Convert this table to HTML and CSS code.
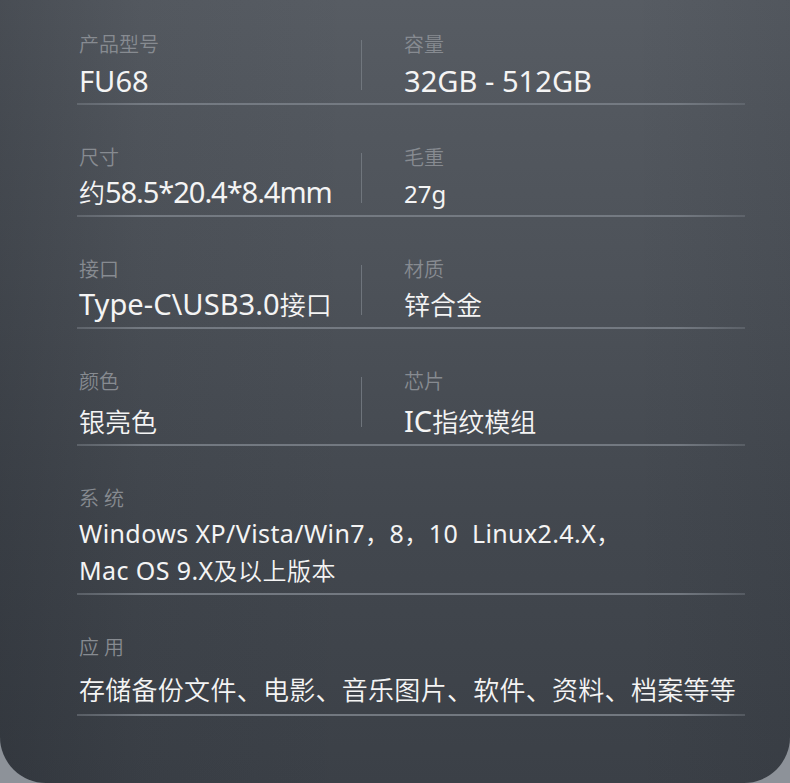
FILE: index.html
```html
<!DOCTYPE html>
<html lang="zh-CN">
<head>
<meta charset="utf-8">
<title>产品参数</title>
<link rel="stylesheet" href="styles.css">
</head>
<body>
<div class="card">
  <div class="specs">
    <div class="row r1">
      <div class="cell"><div class="label">产品型号</div><div class="value"><span class="en">FU68</span></div></div>
      <div class="divider"></div>
      <div class="cell right"><div class="label">容量</div><div class="value"><span class="en">32GB - 512GB</span></div></div>
    </div>
    <div class="row">
      <div class="cell"><div class="label">尺寸</div><div class="value">约<span class="en tight">58.5*20.4*8.4mm</span></div></div>
      <div class="divider"></div>
      <div class="cell right"><div class="label">毛重</div><div class="value small"><span class="en">27g</span></div></div>
    </div>
    <div class="row">
      <div class="cell"><div class="label">接口</div><div class="value"><span class="en">Type-C\USB3.0</span>接口</div></div>
      <div class="divider"></div>
      <div class="cell right"><div class="label">材质</div><div class="value">锌合金</div></div>
    </div>
    <div class="row r4">
      <div class="cell"><div class="label">颜色</div><div class="value">银亮色</div></div>
      <div class="divider"></div>
      <div class="cell right"><div class="label">芯片</div><div class="value"><span class="en">IC</span>指纹模组</div></div>
    </div>
    <div class="row full r5">
      <div class="cell"><div class="label spaced">系统</div><div class="value multi"><span class="en">Windows XP/Vista/Win7</span>，<span class="en">8</span>，<span class="en">10&nbsp; Linux2.4.X</span>，<br><span class="en">Mac OS 9.X</span>及以上版本</div></div>
    </div>
    <div class="row full r6">
      <div class="cell"><div class="label spaced">应用</div><div class="value wide">存储备份文件、电影、音乐图片、软件、资料、档案等等</div></div>
    </div>
  </div>
</div>
</body>
</html>
```

FILE: styles.css
```css
html, body {
  margin: 0;
  padding: 0;
}
body {
  width: 790px;
  height: 783px;
  background: #8d9299;
  overflow: hidden;
  font-family: "Noto Sans CJK SC", "Noto Sans", sans-serif;
}
.card {
  width: 790px;
  height: 783px;
  box-sizing: border-box;
  border-radius: 0 0 46px 46px;
  background:
    linear-gradient(90deg, rgba(20,24,30,0.22) 0%, rgba(20,24,30,0.06) 18%, rgba(0,0,0,0) 45%, rgba(0,0,0,0) 80%, rgba(20,24,30,0.08) 100%),
    linear-gradient(180deg, #575c63 0%, #4d5259 35%, #43484f 65%, #3b4047 100%);
}
.specs {
  margin-left: 77px;
  width: 668px;
  display: flex;
  flex-direction: column;
}
.row {
  display: grid;
  grid-template-columns: 284px 2px 1fr;
  height: 112px;
  padding-top: 38px;
  padding-bottom: 8px;
  box-sizing: border-box;
  background: linear-gradient(90deg, rgba(120,126,134,0.5), rgba(120,126,134,0.9) 10%, rgba(120,126,134,0.9) 90%, rgba(120,126,134,0.4)) bottom / 100% 2px no-repeat;
}
.row.r1 {
  height: 105px;
  padding-top: 30px;
  padding-bottom: 7px;
}
.row.r4 {
  height: 117px;
}
.row.r5 {
  height: 149px;
  padding-bottom: 7px;
}
.row.r6 {
  height: 121px;
  padding-bottom: 10px;
}
.row.full {
  grid-template-columns: 1fr;
}
.cell {
  display: flex;
  flex-direction: column;
  padding-left: 2px;
}
.cell.right {
  padding-left: 41px;
}
.divider {
  background: rgba(120,126,134,0.8);
  margin-top: 10px;
  height: 50px;
  width: 1px;
}
.label {
  font-size: 20px;
  line-height: 28px;
  font-weight: 350;
  color: #878b91;
}
.label.spaced {
  letter-spacing: 5px;
}
.value {
  margin-top: auto;
  font-size: 26px;
  line-height: 34px;
  font-weight: 350;
  color: #f4f4f4;
}
.value.wide {
  letter-spacing: 0.28px;
}
.value .en {
  font-family: "Noto Sans", sans-serif;
  font-size: 1.12em;
  font-weight: 400;
  line-height: 1;
}
.value .en.tight {
  letter-spacing: -1.1px;
}
.value.small .en {
  font-size: 24px;
}
.value.multi {
  font-size: 24px;
  line-height: 37px;
  letter-spacing: 0.5px;
}
.value.multi .en {
  font-size: 25px;
  letter-spacing: 0.4px;
}
```
